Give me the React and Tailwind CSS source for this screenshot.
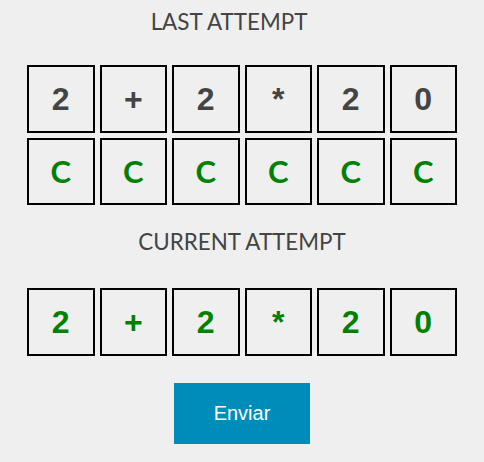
import React from 'react';

const lastAttempt = ['2', '+', '2', '*', '2', '0'];
const feedback = ['C', 'C', 'C', 'C', 'C', 'C'];
const current = ['2', '+', '2', '*', '2', '0'];

function Cell({ children, className }) {
  return (
    <div className={`h-[67.5px] border-2 border-black flex items-center justify-center ${className}`}>
      {children}
    </div>
  );
}

export default function App() {
  return (
    <div className="min-h-[462px] bg-[#efefef] flex flex-col items-center pt-[9px] font-['Lato',sans-serif]">
      <h3 className="mr-[26px] text-[22.4px] leading-[26px] text-[#444]">LAST ATTEMPT</h3>

      <div className="mt-[30px] w-[430px] grid grid-cols-6 gap-[5px]">
        {lastAttempt.map((ch, i) => (
          <Cell key={`l${i}`} className="font-['Liberation_Sans',Arial,sans-serif] font-bold text-[32px] text-[#444]">
            {ch}
          </Cell>
        ))}
        {feedback.map((ch, i) => (
          <Cell key={`f${i}`} className="font-bold text-[31px] text-[#008000]">
            {ch}
          </Cell>
        ))}
      </div>

      <h3 className="mt-[24px] text-[22.4px] leading-[26px] text-[#444]">CURRENT ATTEMPT</h3>

      <div className="mt-[33px] w-[430px] grid grid-cols-6 gap-[5px]">
        {current.map((ch, i) => (
          <Cell key={`c${i}`} className="font-['Liberation_Sans',Arial,sans-serif] font-bold text-[32px] text-[#008000]">
            {ch}
          </Cell>
        ))}
      </div>

      <button className="mt-[27px] w-[136px] h-[61px] bg-[#008cba] text-white text-[20px] font-['Liberation_Sans',Arial,sans-serif]">
        Enviar
      </button>
    </div>
  );
}
